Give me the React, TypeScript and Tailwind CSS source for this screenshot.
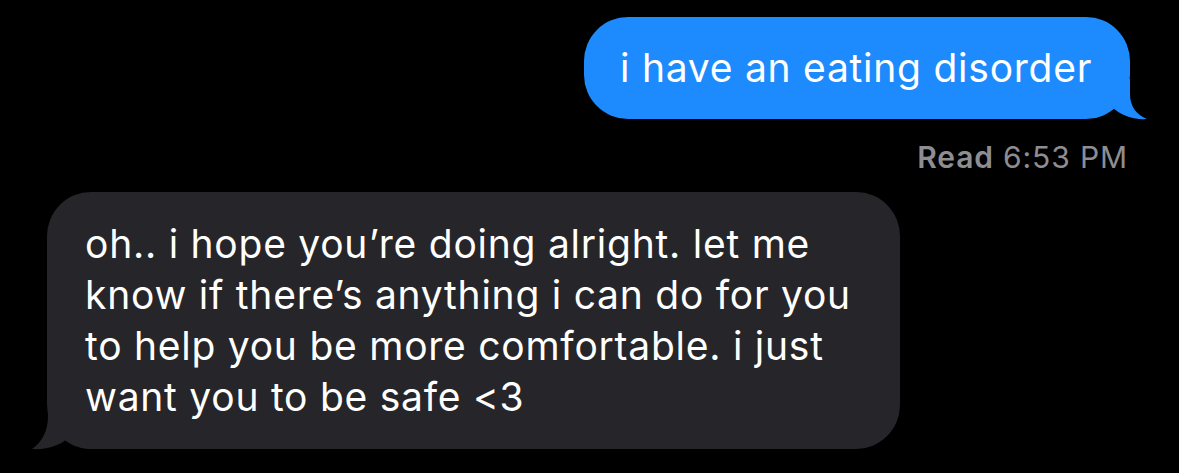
import React from "react";

const font = { fontFamily: "Inter, 'Liberation Sans', sans-serif" };

const App = () => {
  return (
    <div
      className="w-[1179px] h-[473px] bg-black flex flex-col overflow-hidden"
      style={font}
    >
      {/* Sent */}
      <div className="flex justify-end pt-[17px] pr-[49px]">
        <div className="relative">
          <div className="w-[546px] h-[102px] rounded-[44px] bg-[#1d8bfd] flex items-center pl-[36px] text-white text-[39px] tracking-[0.75px] whitespace-nowrap relative z-10">
            i have an eating disorder
          </div>
          <svg
            className="absolute right-[-20px] bottom-[-1px] z-0"
            width="55"
            height="41"
            viewBox="0 0 55 41"
          >
            <path
              d="M35 0 L35 15 C35 28 42 36 52 40 C38 41 25 36 17 28 C11 34 5 38 0 39 L0 0 Z"
              fill="#1d8bfd"
            />
          </svg>
        </div>
      </div>

      {/* Read receipt */}
      <div className="flex justify-end pr-[51px] mt-[20px] text-[30px] text-[#8d8d92] leading-[36px] tracking-[0.9px]">
        <span className="font-semibold">Read</span>
        <span className="ml-[9px]">6:53 PM</span>
      </div>

      {/* Received */}
      <div className="flex pl-[47px] mt-[17px]">
        <div className="relative">
          <div className="w-[853px] h-[257px] rounded-[44px] bg-[#262529] pl-[38px] pt-[26px] text-white text-[39px] leading-[51px] tracking-[0.75px] whitespace-nowrap relative z-10">
            <div>oh.. i hope you’re doing alright. let me</div>
            <div>know if there’s anything i can do for you</div>
            <div>to help you be more comfortable. i just</div>
            <div>want you to be safe &lt;3</div>
          </div>
          <svg
            className="absolute left-[-17px] bottom-[-1px] z-0"
            width="60"
            height="44"
            viewBox="0 0 60 44"
          >
            <path
              d="M18 0 L18 10 C18 25 12 36 2 43 C18 44 30 39 37 33 C44 39 52 43 60 43 L60 0 Z"
              fill="#262529"
            />
          </svg>
        </div>
      </div>
    </div>
  );
};

export default App;
